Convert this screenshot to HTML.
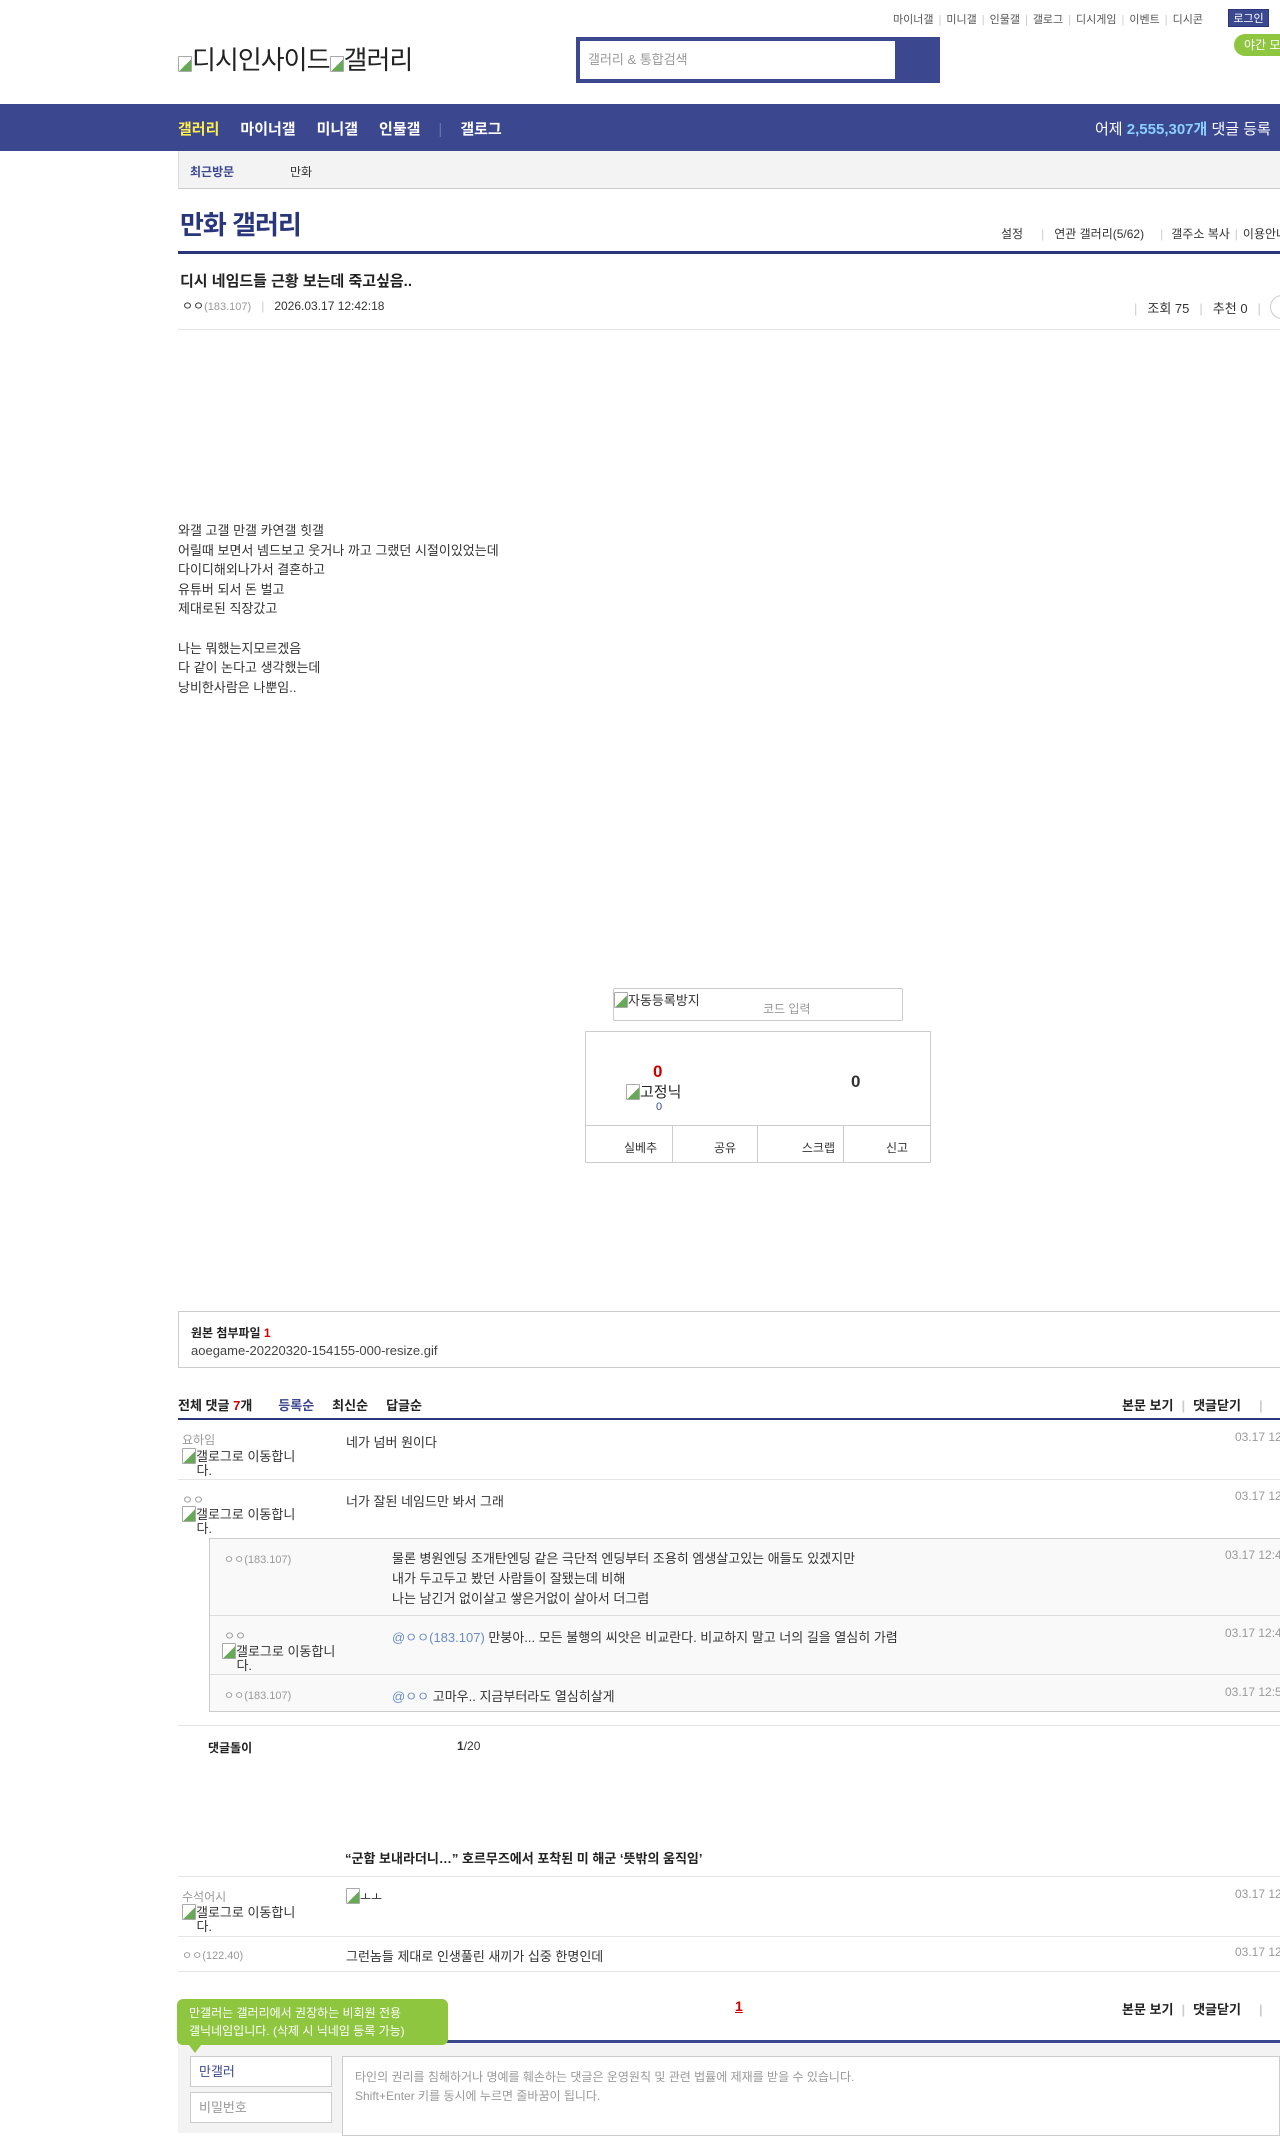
<!DOCTYPE html>
<html><head><meta charset="utf-8">
<style>
*{margin:0;padding:0;box-sizing:border-box}
body{width:1280px;height:2129px;position:relative;overflow:hidden;background:#fff;font-family:"Liberation Sans","Noto Sans CJK KR",sans-serif;font-size:12px;color:#333}
.a{position:absolute;white-space:nowrap}
.g{color:#999}
.sep{color:#ccc;margin:0 5px}
.line{position:absolute;left:178px;right:0;height:1px;background:#e5e5e5}
.img{display:inline-block;width:14px;height:16px;border:1px solid #aaa;border-radius:1px;vertical-align:-3px;background:linear-gradient(135deg,#fff 55%,#6a5 56%)}
</style></head><body>
<div class="a" style="top:11px;left:893px;font-size:11px;color:#555">마이너갤<span class="sep">|</span>미니갤<span class="sep">|</span>인물갤<span class="sep">|</span>갤로그<span class="sep">|</span>디시게임<span class="sep">|</span>이벤트<span class="sep">|</span>디시콘</div>
<div class="a" style="top:9px;left:1228px;width:41px;height:18px;background:#3b4890;color:#fff;font-size:11px;text-align:center;line-height:18px;border:1px solid #29367c">로그인</div>
<div class="a" style="top:34px;left:1234px;width:60px;height:22px;background:#8ec63f;border-radius:11px;color:#fff;font-size:12px;line-height:22px;padding-left:10px">야간 모드</div>
<div class="a" style="top:40px;left:178px;font-size:26px;color:#222;letter-spacing:-1px"><span class="img"></span>디시인사이드<span class="img"></span>갤러리</div>
<div class="a" style="top:37px;left:576px;width:364px;height:46px;background:#3b4890"></div>
<div class="a" style="top:41px;left:580px;width:315px;height:38px;background:#fff;color:#999;font-size:13px;line-height:38px;padding-left:8px">갤러리 &amp; 통합검색</div>
<div class="a" style="top:104px;left:0;width:1280px;height:47px;background:#3b4890"></div>
<div class="a" style="top:118px;left:178px;font-size:15px;font-weight:bold;color:#fff"><span style="color:#ffed4a">갤러리</span><span style="margin-left:21px">마이너갤</span><span style="margin-left:21px">미니갤</span><span style="margin-left:21px">인물갤</span><span style="color:#6b76b0;margin:0 18px;font-weight:normal">|</span>갤로그</div>
<div class="a" style="top:118px;left:1095px;font-size:15px;color:#fff">어제 <b style="color:#8ad0ff">2,555,307개</b> 댓글 등록</div>
<div class="a" style="top:151px;left:178px;right:0;height:38px;background:#f3f3f3;border-left:1px solid #ddd;border-bottom:1px solid #ccc"></div>
<div class="a" style="top:163px;left:190px;font-size:12px;font-weight:bold;color:#3b4890">최근방문</div>
<div class="a" style="top:163px;left:290px;font-size:12px;color:#333">만화</div>
<div class="a" style="top:205px;left:180px;font-size:26px;font-weight:bold;color:#29367c;letter-spacing:-1px">만화 갤러리</div>
<div class="a" style="top:225px;left:1001px;font-size:12px;color:#333">설정<span class="sep" style="margin:0 10px 0 18px">|</span>연관 갤러리(5/62)<span class="sep" style="margin:0 8px 0 16px">|</span>갤주소 복사<span class="sep">|</span>이용안내</div>
<div class="a" style="top:251px;left:178px;right:0;height:3px;background:#29367c"></div>
<div class="a" style="top:270px;left:180px;font-size:15px;font-weight:bold;color:#222">디시 네임드들 근황 보는데 죽고싶음..</div>
<div class="a" style="top:297px;left:182px;font-size:12px;color:#333">ㅇㅇ<span class="g" style="font-size:11px">(183.107)</span><span class="sep" style="margin:0 10px">|</span>2026.03.17 12:42:18</div>
<div class="a" style="top:298px;left:1134px;font-size:13px;color:#333"><span class="sep" style="margin:0 10px 0 0">|</span>조회 75<span class="sep" style="margin:0 10px">|</span>추천 0<span class="sep" style="margin:0 10px">|</span></div>
<div class="a" style="top:295px;left:1270px;width:24px;height:24px;border:1px solid #ccc;border-radius:12px"></div>
<div class="line" style="top:329px"></div>
<div class="a" style="top:521px;left:178px;font-size:13px;line-height:19.6px;color:#333">와갤 고갤 만갤 카연갤 힛갤<br>어릴때 보면서 넴드보고 웃거나 까고 그랬던 시절이있었는데<br>다이디해외나가서 결혼하고<br>유튜버 되서 돈 벌고<br>제대로된 직장갔고<br><br>나는 뭐했는지모르겠음<br>다 같이 논다고 생각했는데<br>낭비한사람은 나뿐임..</div>
<div class="a" style="top:988px;left:613px;width:290px;height:33px;border:1px solid #ccc;border-radius:2px"></div>
<div class="a" style="top:990px;left:614px;font-size:13px;color:#333"><span class="img"></span>자동등록방지</div>
<div class="a" style="top:1000px;left:763px;font-size:12px;color:#999">코드 입력</div>
<div class="a" style="top:1031px;left:585px;width:346px;height:132px;border:1px solid #ccc"></div>
<div class="a" style="top:1125px;left:585px;width:346px;height:1px;background:#ccc"></div>
<div class="a" style="top:1125px;left:672px;width:1px;height:37px;background:#ccc"></div>
<div class="a" style="top:1125px;left:757px;width:1px;height:37px;background:#ccc"></div>
<div class="a" style="top:1125px;left:843px;width:1px;height:37px;background:#ccc"></div>
<div class="a" style="top:1062px;left:653px;font-size:17px;font-weight:bold;color:#c00">0</div>
<div class="a" style="top:1081px;left:626px;font-size:15px;color:#222"><span class="img"></span>고정닉</div>
<div class="a" style="top:1101px;left:656px;font-size:11px;color:#3b4890">0</div>
<div class="a" style="top:1072px;left:851px;font-size:17px;font-weight:bold;color:#333">0</div>
<div class="a" style="top:1139px;left:624px;font-size:12px;color:#333">실베추</div>
<div class="a" style="top:1139px;left:714px;font-size:12px;color:#333">공유</div>
<div class="a" style="top:1139px;left:759px;width:84px;text-align:right;padding-right:8px;font-size:12px;color:#333">스크랩</div>
<div class="a" style="top:1139px;left:886px;font-size:12px;color:#333">신고</div>
<div class="a" style="top:1311px;left:178px;right:-2px;height:57px;border:1px solid #ccc"></div>
<div class="a" style="top:1324px;left:191px;font-size:12px;font-weight:bold;color:#222">원본 첨부파일 <span style="color:#c00">1</span></div>
<div class="a" style="top:1343px;left:191px;font-size:13px;color:#444">aoegame-20220320-154155-000-resize.gif</div>
<div class="a" style="top:1395px;left:178px;font-size:13px;font-weight:bold;color:#222">전체 댓글 <span style="color:#c00">7</span>개<span style="color:#3b4890;margin-left:26px">등록순</span><span style="margin-left:18px">최신순</span><span style="margin-left:18px">답글순</span></div>
<div class="a" style="top:1395px;left:1122px;font-size:13px;font-weight:bold;color:#222">본문 보기<span class="sep" style="margin:0 8px">|</span>댓글닫기<span class="sep" style="margin:0 10px 0 18px">|</span></div>
<div class="a" style="top:1418px;left:178px;right:0;height:2px;background:#29367c"></div>
<!-- c1 -->
<div class="a g" style="top:1431px;left:182px;font-size:12px">요하임</div>
<div class="a" style="top:1448px;left:182px;font-size:13px;color:#333;line-height:14px"><span class="img"></span>갤로그로 이동합니<br>&nbsp;&nbsp;&nbsp;&nbsp;다.</div>
<div class="a" style="top:1432px;left:346px;font-size:13px">네가 넘버 원이다</div>
<div class="a g" style="top:1430px;left:1235px;font-size:12px">03.17 12:45:10</div>
<div class="line" style="top:1479px"></div>
<div class="a g" style="top:1491px;left:182px;font-size:12px">ㅇㅇ</div>
<div class="a" style="top:1506px;left:182px;font-size:13px;line-height:14px"><span class="img"></span>갤로그로 이동합니<br>&nbsp;&nbsp;&nbsp;&nbsp;다.</div>
<div class="a" style="top:1491px;left:346px;font-size:13px">너가 잘된 네임드만 봐서 그래</div>
<div class="a g" style="top:1489px;left:1235px;font-size:12px">03.17 12:46:02</div>
<div class="a" style="top:1538px;left:209px;right:0;height:174px;background:#f9f9f9;border:1px solid #ccc;border-right:0"></div>
<div class="a" style="top:1615px;left:210px;right:0;height:1px;background:#ddd"></div>
<div class="a" style="top:1674px;left:210px;right:0;height:1px;background:#ddd"></div>
<div class="a g" style="top:1551px;left:224px;font-size:11px">ㅇㅇ(183.107)</div>
<div class="a" style="top:1549px;left:392px;font-size:13px;line-height:20px">물론 병원엔딩 조개탄엔딩 같은 극단적 엔딩부터 조용히 엠생살고있는 애들도 있겠지만<br>내가 두고두고 봤던 사람들이 잘됐는데 비해<br>나는 남긴거 없이살고 쌓은거없이 살아서 더그럼</div>
<div class="a g" style="top:1548px;left:1225px;font-size:12px">03.17 12:47:33</div>
<div class="a g" style="top:1627px;left:224px;font-size:12px">ㅇㅇ</div>
<div class="a" style="top:1643px;left:222px;font-size:13px;line-height:14px"><span class="img"></span>갤로그로 이동합니<br>&nbsp;&nbsp;&nbsp;&nbsp;다.</div>
<div class="a" style="top:1627px;left:392px;font-size:13px"><span style="color:#6a8cc8">@ㅇㅇ(183.107)</span> 만붕아... 모든 불행의 씨앗은 비교란다. 비교하지 말고 너의 길을 열심히 가렴</div>
<div class="a g" style="top:1626px;left:1225px;font-size:12px">03.17 12:49:01</div>
<div class="a g" style="top:1687px;left:224px;font-size:11px">ㅇㅇ(183.107)</div>
<div class="a" style="top:1686px;left:392px;font-size:13px"><span style="color:#6a8cc8">@ㅇㅇ</span> 고마우.. 지금부터라도 열심히살게</div>
<div class="a g" style="top:1685px;left:1225px;font-size:12px">03.17 12:50:11</div>
<div class="line" style="top:1725px"></div>
<div class="a" style="top:1739px;left:208px;font-size:12px;font-weight:bold;color:#222">댓글돌이</div>
<div class="a" style="top:1739px;left:457px;font-size:12px;color:#333"><b>1</b>/20</div>
<div class="a" style="top:1848px;left:345px;font-size:13px;font-weight:bold;color:#222">“군함 보내라더니…” 호르무즈에서 포착된 미 해군 ‘뜻밖의 움직임’</div>
<div class="line" style="top:1876px"></div>
<div class="a g" style="top:1888px;left:182px;font-size:12px">수석어시</div>
<div class="a" style="top:1904px;left:182px;font-size:13px;line-height:14px"><span class="img"></span>갤로그로 이동합니<br>&nbsp;&nbsp;&nbsp;&nbsp;다.</div>
<div class="a" style="top:1888px;left:346px;font-size:12px"><span class="img"></span>ㅗㅗ</div>
<div class="a g" style="top:1887px;left:1235px;font-size:12px">03.17 12:52:40</div>
<div class="line" style="top:1936px"></div>
<div class="a g" style="top:1947px;left:182px;font-size:11px">ㅇㅇ(122.40)</div>
<div class="a" style="top:1946px;left:346px;font-size:13px">그런놈들 제대로 인생풀린 새끼가 십중 한명인데</div>
<div class="a g" style="top:1945px;left:1235px;font-size:12px">03.17 12:55:03</div>
<div class="line" style="top:1971px"></div>
<div class="a" style="top:1998px;left:735px;font-size:14px;font-weight:bold;color:#c00;text-decoration:underline">1</div>
<div class="a" style="top:1999px;left:1122px;font-size:13px;font-weight:bold;color:#222">본문 보기<span class="sep" style="margin:0 8px">|</span>댓글닫기<span class="sep" style="margin:0 10px 0 18px">|</span></div>
<div class="a" style="top:2040px;left:178px;right:0;height:3px;background:#3b4890"></div>
<div class="a" style="top:2043px;left:178px;right:0;height:90px;background:#f3f3f3"></div>
<div class="a" style="top:1999px;left:177px;width:271px;height:46px;background:#8ec63f;border-radius:6px;color:#fff;font-size:12px;line-height:18px;padding:5px 12px">만갤러는 갤러리에서 권장하는 비회원 전용<br>갤닉네임입니다. (삭제 시 닉네임 등록 가능)</div>
<div class="a" style="top:2045px;left:189px;width:0;height:0;border-left:6px solid transparent;border-right:6px solid transparent;border-top:8px solid #8ec63f"></div>
<div class="a" style="top:2056px;left:190px;width:142px;height:31px;background:#fff;border:1px solid #ccc;font-size:13px;color:#3b4890;line-height:29px;padding-left:8px">만갤러</div>
<div class="a" style="top:2092px;left:190px;width:142px;height:31px;background:#fff;border:1px solid #ccc;font-size:13px;color:#999;line-height:29px;padding-left:8px">비밀번호</div>
<div class="a" style="top:2056px;left:342px;right:0;height:80px;background:#fff;border:1px solid #ccc;font-size:12px;color:#999;line-height:19px;padding:11px 12px">타인의 권리를 침해하거나 명예를 훼손하는 댓글은 운영원칙 및 관련 법률에 제재를 받을 수 있습니다.<br>Shift+Enter 키를 동시에 누르면 줄바꿈이 됩니다.</div>
</body></html>
